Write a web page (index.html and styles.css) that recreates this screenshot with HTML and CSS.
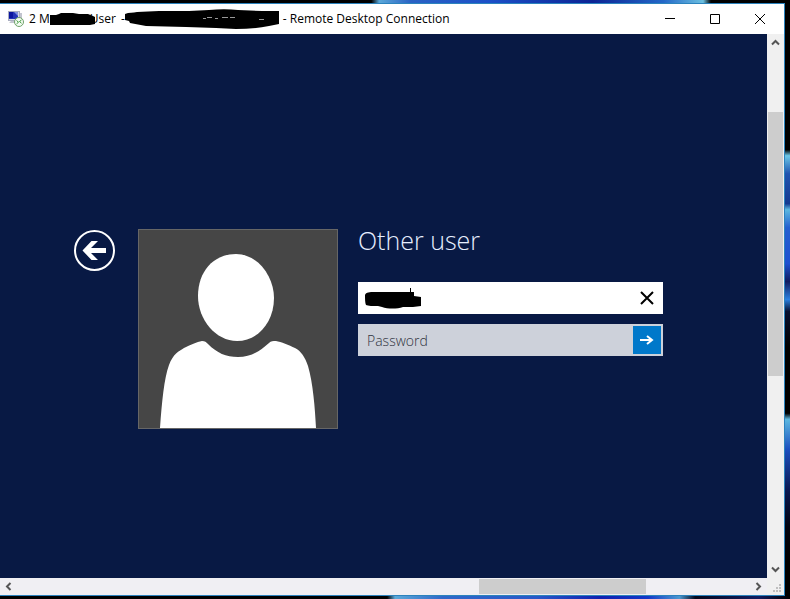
FILE: index.html
```html
<!DOCTYPE html>
<html lang="en">
<head>
  <meta charset="UTF-8">
  <meta name="viewport" content="width=device-width, initial-scale=1.0">
  <title>Remote Desktop Connection</title>
  <link rel="stylesheet" href="styles.css">
</head>
<body>
  <div class="window">
    <header class="titlebar">
      <svg class="app-icon" width="16" height="16" viewBox="0 0 16 16">
        <rect x="0.5" y="0.5" width="11" height="9" fill="#d5d8e6" stroke="#a9adc0"/>
        <rect x="1" y="1" width="9" height="7" fill="#2434b8"/>
        <path d="M1 1h4v6H1z" fill="#0b16a0"/>
        <path d="M6 1h4v4z" fill="#7f90e0"/>
        <path d="M12 2h2v8h-2zM3 10h6v2H1z" fill="#c3c5d0"/>
        <circle cx="11" cy="11" r="4.500" fill="#f4fbf3" stroke="#6fa06b"/>
        <path d="M8.500 9.500l2 1.700-2 1.700M13.500 9l-2 1.500 2 1.700" fill="none" stroke="#3d9a3a"/>
      </svg>
      <h1 class="caption">
        <span>2 M</span>
        <svg class="mark mark-name" width="46" height="12" viewBox="0 0 46 12">
          <path d="M0 2l6 0 3-1 2-1 12 0 6 1 9 0 5 2 2 1v7l-5 1H0z"/>
        </svg>
        <span class="caption-user">User</span>
        <span class="caption-dash">-</span>
        <svg class="mark mark-host" width="155" height="20" viewBox="0 0 155 20">
          <path d="M0 5c4-2 8-1 12-2l22-1 30 0 20-1c10-1 20-1 29 0l24 1h17v13l-10 2c-10 2-22 3-33 3l-20-1-30-1-40-1-16-3-1-2-4-1z"/>
          <path d="M78 9.500h3m1-1h5m3 1h3m4-1h6m2 0h5m24 2h5" fill="none" stroke="#999"/>
        </svg>
        <span>- Remote Desktop Connection</span>
      </h1>
      <div class="window-buttons">
        <button type="button" aria-label="Minimize">
          <svg width="10" height="10" viewBox="0 0 10 10"><path d="M0 4.500h10"/></svg>
        </button>
        <button type="button" aria-label="Maximize">
          <svg width="10" height="10" viewBox="0 0 10 10"><path d="M.5.500h9v9h-9z"/></svg>
        </button>
        <button type="button" aria-label="Close">
          <svg width="10" height="10" viewBox="0 0 10 10"><path d="M0 0l10 10M10 0L0 10"/></svg>
        </button>
      </div>
    </header>

    <div class="viewport">
      <main class="screen">
        <button type="button" class="back" aria-label="Back">
          <svg width="41" height="41" viewBox="0 0 41 41">
            <circle cx="20.500" cy="20.500" r="19.500" fill="none" stroke="#fff" stroke-width="2"/>
            <path d="M8.500 20.500L17.500 11H24l-7 7h15v5H17l7 7h-6.500z" fill="#fff"/>
          </svg>
        </button>

        <div class="avatar">
          <svg viewBox="0 0 198 198">
            <path d="M97 24C119 24 135 47 135 68C135 92 119 111 98 111C77 111 59 90 59 66C59 42 74 24 97 24Z"/>
            <path d="M21 198C23 171 25 149 30 135C34 124 40 121 45 118C51 115 58 112 63 111C66 111 67 112 69 114C78 123 87 127 99 127C112 127 121 121 130 113C132 111 134 111 137 111C142 112 150 115 156 118C162 121 166 127 169 136C174 153 176 178 177 198Z"/>
          </svg>
        </div>

        <form class="login" onsubmit="return false">
          <h2>Other user</h2>
          <div class="field field-user">
            <input type="text" aria-label="User name">
            <svg class="user-mark" width="56" height="21" viewBox="0 0 56 21">
              <path d="M0 7c1-3 5-3 9-3l16 0 20 0V0h1v4h3v4l7 1v9l-8 1H38c-6 2-15 2-21 0l-4-1c-5 0-10 0-12-1C0 15 0 11 0 7z"/>
            </svg>
            <button type="button" class="clear" aria-label="Clear">
              <svg width="14" height="14" viewBox="0 0 14 14"><path d="M1 1l12 12M13 1L1 13"/></svg>
            </button>
          </div>
          <div class="field field-password">
            <input type="password" placeholder="Password" aria-label="Password">
            <button type="submit" class="submit" aria-label="Submit">
              <svg width="14" height="10" viewBox="0 0 14 10"><path d="M0 5h12M7 1l5 4-5 4"/></svg>
            </button>
          </div>
        </form>
      </main>

      <div class="scrollbar vertical">
        <button type="button" aria-label="Scroll up">
          <svg width="9" height="7" viewBox="0 0 9 7"><path d="M1 5.500L4.500 2 8 5.500"/></svg>
        </button>
        <div class="before"></div>
        <div class="thumb"></div>
        <div class="after"></div>
        <button type="button" aria-label="Scroll down">
          <svg width="9" height="7" viewBox="0 0 9 7"><path d="M1 1.500L4.500 5 8 1.500"/></svg>
        </button>
      </div>

      <div class="scrollbar horizontal">
        <button type="button" aria-label="Scroll left">
          <svg width="7" height="9" viewBox="0 0 7 9"><path d="M5.500 1L2 4.500 5.500 8"/></svg>
        </button>
        <div class="before"></div>
        <div class="thumb"></div>
        <div class="after"></div>
        <button type="button" aria-label="Scroll right">
          <svg width="7" height="9" viewBox="0 0 7 9"><path d="M1.500 1L5 4.500 1.500 8"/></svg>
        </button>
      </div>

      <div class="grip">
        <svg width="8" height="8" viewBox="0 0 8 8">
          <path d="M6 0h2v2H6zM3 3h2v2H3zM6 3h2v2H6zM0 6h2v2H0zM3 6h2v2H3zM6 6h2v2H6z"/>
        </svg>
      </div>
    </div>
  </div>
</body>
</html>
```
FILE: styles.css
```css
* {
  margin: 0;
  padding: 0;
  box-sizing: border-box;
}

body {
  min-height: 100vh;
  display: flex;
  padding: 3px 5px 3px 0;
  font-family: "Open Sans", "Noto Sans", sans-serif;
  /* wallpaper that shows round the window: top, bottom, right */
  background:
    linear-gradient(to right, transparent 47%, #5ba8d8 48%, #2a62c4 52%, #1c50c8 62%, #0c2494 75%, #2468c8 84%, #6cc0e0 89%, transparent 90%) top / 100% 3px no-repeat,
    linear-gradient(to right, transparent 49%, #5ba8d8 50%, #2f68c8 56%, #2858c8 68%, #1020b0 76%, #1238c8 82%, #4c98d0 86%, #04081c 88%, #101c60 96%, #000 100%) bottom / 100% 3px no-repeat,
    linear-gradient(to bottom, transparent 25%, #6cc8e8 26%, #2054b0 29%, #143a90 34%, #5cb8e0 35%, #2460d0 38%, #1c50d0 44%, #101c60 47%, #2a80e0 50%, #081030 52%, #000 58%, transparent 69%, #5cb8e0 70%, #1c50c0 75%, #0a1850 82%, #020410 88%, transparent 94%) right / 5px 100% no-repeat,
    #000;
}

button {
  border: none;
  background: none;
  display: flex;
  align-items: center;
  justify-content: center;
}

svg {
  display: block;
}

.window {
  flex: 1;
  display: flex;
  flex-direction: column;
  border: 1px solid #2b83bd;
  border-left: none;
}

/* title bar */
.titlebar {
  height: 30px;
  display: flex;
  align-items: center;
  padding: 0 2px 0 8px;
  background: #fff;
}

.app-icon {
  flex: none;
  margin-right: 5px;
}

.caption {
  flex: 1;
  display: flex;
  align-items: center;
  font-size: 12px;
  font-weight: 400;
  line-height: 16px;
  white-space: nowrap;
  color: #000;
}

.mark {
  flex: none;
  position: relative;
}

.mark-host {
  margin-right: 3px;
}

.caption-user {
  margin-left: -6px;
}

.caption-dash {
  margin-left: 5px;
}

.window-buttons {
  display: flex;
}

.window-buttons button {
  width: 45px;
  height: 29px;
}

.window-buttons svg {
  fill: none;
  stroke: #000;
}

/* remote screen with its scrollbars */
.viewport {
  flex: 1;
  display: grid;
  grid-template-columns: 1fr 17px;
  grid-template-rows: 1fr 17px;
}

.screen {
  display: flex;
  align-items: flex-start;
  padding: 195px 74px 40px;
  background: #081944;
}

.back {
  flex: none;
  margin: 1px 23px 0 0;
}

.avatar {
  flex: none;
  width: 200px;
  margin-right: 20px;
  border: 1px solid #666;
  background: #464646;
}

.avatar svg {
  fill: #fff;
}

.login {
  flex: 1;
  max-width: 305px;
}

.login h2 {
  margin: -7px 0 24px;
  font-size: 25px;
  font-weight: 300;
  line-height: 36px;
  color: #e6eeff;
}

.field {
  position: relative;
  display: flex;
  height: 32px;
  margin-bottom: 10px;
}

.field input {
  flex: 1;
  min-width: 0;
  padding-left: 7px;
  border: none;
  outline: none;
  background: none;
  font-family: inherit;
  font-size: 14px;
}

.field-user {
  background: #fff;
}

.user-mark {
  position: absolute;
  left: 7px;
  top: 6px;
}

.clear {
  width: 32px;
}

.clear svg {
  fill: none;
  stroke: #000;
  stroke-width: 2;
}

.field-password {
  padding: 2px;
  background: #cdd1da;
}

.field-password input::placeholder {
  font-weight: 300;
  color: #30343e;
  opacity: 1;
}

.field-password input {
  font-weight: 300;
}

.submit {
  width: 28px;
  background: #0078ca;
}

.submit svg {
  fill: none;
  stroke: #fff;
  stroke-width: 2;
}

/* scrollbars */
.scrollbar {
  display: flex;
  background: #f0f0f0;
}

.scrollbar button {
  flex: none;
  width: 17px;
  height: 17px;
}

.scrollbar svg {
  fill: none;
  stroke: #555;
  stroke-width: 2;
}

.thumb {
  background: #cdcdcd;
}

.vertical {
  flex-direction: column;
}

.vertical .thumb {
  margin: 0 1px;
  flex: 264;
}

.vertical .before {
  flex: 61;
}

.vertical .after {
  flex: 185;
}

.horizontal {
  background: #f0eff3;
}

.horizontal .thumb {
  margin: 1px 0;
  flex: 167;
}

.horizontal .before {
  flex: 462;
}

.horizontal .after {
  flex: 104;
}

.grip {
  display: flex;
  align-items: flex-end;
  justify-content: flex-end;
  padding: 3px;
  background: #f0f0f0;
}

.grip svg {
  fill: #bfbfbf;
}
```
